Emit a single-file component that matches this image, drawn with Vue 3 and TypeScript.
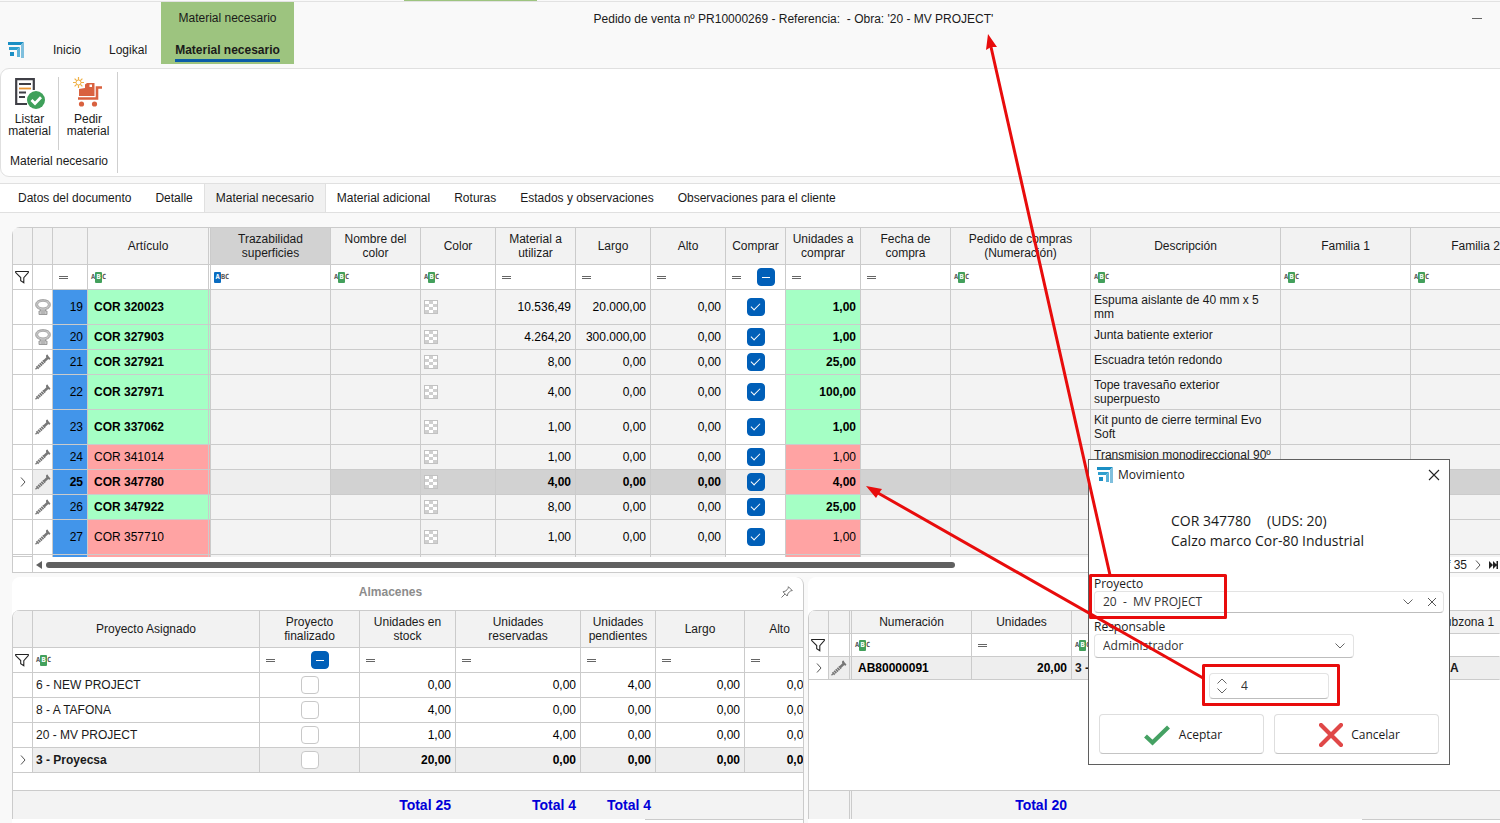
<script setup lang="ts">
import { ref } from 'vue'

type FilterKind = 'none' | 'funnel' | 'eq' | 'abc' | 'abc-start' | 'eq-check'

interface Column {
  label: string
  width?: number
  filter: FilterKind
  cls?: string
}

interface MaterialRow {
  n: number
  icon: 'seal' | 'screw'
  code: string
  tone: 'ok' | 'ko'
  used: string
  length: string
  buy: boolean
  units: string
  desc: string
  tall: boolean
  current?: boolean
}

const menu = ['Inicio', 'Logikal']

const docTabs = [
  'Datos del documento',
  'Detalle',
  'Material necesario',
  'Material adicional',
  'Roturas',
  'Estados y observaciones',
  'Observaciones para el cliente',
]
const activeTab = ref('Material necesario')

const columns: Column[] = [
  { label: '', width: 20, filter: 'funnel' },
  { label: '', width: 20, filter: 'none' },
  { label: '', width: 35, filter: 'eq' },
  { label: 'Artículo', width: 123, filter: 'abc', cls: 'fixed-edge' },
  { label: 'Trazabilidad\nsuperficies', width: 120, filter: 'abc-start', cls: 'focused' },
  { label: 'Nombre del\ncolor', width: 90, filter: 'abc' },
  { label: 'Color', width: 75, filter: 'abc' },
  { label: 'Material a\nutilizar', width: 80, filter: 'eq' },
  { label: 'Largo', width: 75, filter: 'eq' },
  { label: 'Alto', width: 75, filter: 'eq' },
  { label: 'Comprar', width: 60, filter: 'eq-check' },
  { label: 'Unidades a\ncomprar', width: 75, filter: 'eq' },
  { label: 'Fecha de\ncompra', width: 90, filter: 'eq' },
  { label: 'Pedido de compras\n(Numeración)', width: 140, filter: 'abc' },
  { label: 'Descripción', width: 190, filter: 'abc' },
  { label: 'Familia 1', width: 130, filter: 'abc' },
  { label: 'Familia 2', filter: 'abc' },
]

const rows = ref<MaterialRow[]>([
  { n: 19, icon: 'seal', code: 'COR 320023', tone: 'ok', used: '10.536,49', length: '20.000,00', buy: true, units: '1,00', desc: 'Espuma aislante de 40 mm x 5 mm', tall: true },
  { n: 20, icon: 'seal', code: 'COR 327903', tone: 'ok', used: '4.264,20', length: '300.000,00', buy: true, units: '1,00', desc: 'Junta batiente exterior', tall: false },
  { n: 21, icon: 'screw', code: 'COR 327921', tone: 'ok', used: '8,00', length: '0,00', buy: true, units: '25,00', desc: 'Escuadra tetón redondo', tall: false },
  { n: 22, icon: 'screw', code: 'COR 327971', tone: 'ok', used: '4,00', length: '0,00', buy: true, units: '100,00', desc: 'Tope travesaño exterior superpuesto', tall: true },
  { n: 23, icon: 'screw', code: 'COR 337062', tone: 'ok', used: '1,00', length: '0,00', buy: true, units: '1,00', desc: 'Kit punto de cierre terminal Evo Soft', tall: true },
  { n: 24, icon: 'screw', code: 'COR 341014', tone: 'ko', used: '1,00', length: '0,00', buy: true, units: '1,00', desc: 'Transmision monodireccional 90º', tall: false },
  { n: 25, icon: 'screw', code: 'COR 347780', tone: 'ko', used: '4,00', length: '0,00', buy: true, units: '4,00', desc: '', tall: false, current: true },
  { n: 26, icon: 'screw', code: 'COR 347922', tone: 'ok', used: '8,00', length: '0,00', buy: true, units: '25,00', desc: '', tall: false },
  { n: 27, icon: 'screw', code: 'COR 357710', tone: 'ko', used: '1,00', length: '0,00', buy: true, units: '1,00', desc: '', tall: true },
])

const stockColumns: Column[] = [
  { label: '', width: 20, filter: 'funnel' },
  { label: 'Proyecto Asignado', width: 227, filter: 'abc' },
  { label: 'Proyecto\nfinalizado', width: 100, filter: 'eq-check' },
  { label: 'Unidades en\nstock', width: 96, filter: 'eq' },
  { label: 'Unidades\nreservadas', width: 125, filter: 'eq' },
  { label: 'Unidades\npendientes', width: 75, filter: 'eq' },
  { label: 'Largo', width: 89, filter: 'eq' },
  { label: 'Alto', filter: 'eq' },
]

const stock = ref([
  { project: '6 - NEW PROJECT', done: false, values: ['0,00', '0,00', '4,00', '0,00', '0,00'], current: false },
  { project: '8 - A TAFONA', done: false, values: ['4,00', '0,00', '0,00', '0,00', '0,00'], current: false },
  { project: '20 - MV PROJECT', done: false, values: ['1,00', '4,00', '0,00', '0,00', '0,00'], current: false },
  { project: '3 - Proyecsa', done: false, values: ['20,00', '0,00', '0,00', '0,00', '0,00'], current: true },
])

const orderColumns: Column[] = [
  { label: '', width: 20, filter: 'funnel' },
  { label: '', width: 23, filter: 'none', cls: 'fixed-edge' },
  { label: 'Numeración', width: 120, filter: 'abc' },
  { label: 'Unidades', width: 100, filter: 'eq' },
  { label: '', width: 360, filter: 'abc' },
  { label: 'Subzona 1', filter: 'none' },
]

const units = ref(4)
const project = ref('20')
const owner = ref('Administrador')
</script>

<template>
  <div class="app">
    <svg class="defs" width="0" height="0" aria-hidden="true">
      <symbol id="logo" viewBox="0 0 16 16">
        <path d="M0 0H16L13 3H0Z" fill="#1b8fc4" />
        <path d="M16 0V16H13V3Z" fill="#7fbfdd" />
        <path d="M1 5H12L9 8H1Z" fill="#2f9fce" />
        <path d="M12 5V15H9V8Z" fill="#5cb2d8" />
        <path d="M2 10H6V14H2Z" fill="#1b8fc4" />
      </symbol>
      <symbol id="funnel" viewBox="0 0 14 14">
        <path d="M.7 1.5H13.3V2.6L8.800 7.600V12.800L5.700 10.600V7.600L.7 2.600Z" fill="none" stroke="#222" stroke-width="1.100" />
      </symbol>
      <symbol id="seal" viewBox="0 0 16 16">
        <path d="M5.500 10.500C2.500 9.800.7 8.200.7 5.700.7 2.500 3.500.7 8 .7S15.300 2.500 15.300 5.700C15.300 8.200 13.500 9.800 10.500 10.500V12H12V15.500H4V12H5.500Z" fill="#c8c8c8" stroke="#929292" stroke-width=".9" />
        <ellipse cx="8" cy="5.600" rx="5.300" ry="3.300" fill="#fff" stroke="#929292" stroke-width=".7" />
        <path d="M7 10.500V15M9 10.500V15" stroke="#9a9a9a" stroke-width=".8" />
      </symbol>
      <symbol id="screw" viewBox="0 0 16 16">
        <path d="M.5 15.200L2 13.800" stroke="#777" stroke-width="1.200" />
        <path d="M2 14L9.500 7" stroke="#777" stroke-width="3.200" stroke-dasharray="1.700 .5" />
        <path d="M9 7.400L13.300 3.300" stroke="#777" stroke-width="2.600" />
        <path d="M11.200 1L12.600.6 13.300 2.100 15.400 4.400 14.800 5.700 13.400 5.300 11 2.700Z" fill="#777" />
      </symbol>
      <symbol id="right" viewBox="0 0 8 10">
        <path d="M2 .5L6 5 2 9.500" fill="none" stroke="#555" stroke-width="1" />
      </symbol>
      <symbol id="down" viewBox="0 0 12 8">
        <path d="M1.500 1.500L6 6 10.500 1.500" fill="none" stroke="#666" stroke-width="1" />
      </symbol>
      <symbol id="swatch" viewBox="0 0 14 14">
        <rect x=".5" y=".5" width="13" height="13" fill="#fff" stroke="#c2c2c2" />
        <path d="M5 1H9V4H5ZM1 4H5V7H1ZM9 4H13V7H9ZM5 7H9V10H5ZM1 10H5V13H1ZM9 10H13V13H9Z" fill="#cfcfcf" />
      </symbol>
    </svg>

    <header class="top">
      <nav class="menu">
        <svg class="logo"><use href="#logo" /></svg>
        <button v-for="m in menu" :key="m" class="menu-item">{{ m }}</button>
      </nav>
      <div class="context">
        <span class="context-group">Material necesario</span>
        <button class="context-tab">Material necesario</button>
      </div>
      <h1 class="title">Pedido de venta nº PR10000269 - Referencia:&nbsp; - Obra: '20 - MV PROJECT'</h1>
      <div class="window-tools"><button class="minimize" aria-label="Minimizar"></button></div>
      <span class="top-mark"></span>
    </header>

    <section class="ribbon">
      <div class="group">
        <div class="tools">
          <button class="tool">
            <svg viewBox="0 0 32 32">
              <path d="M13 27H2.200V2.200H19.800V13" fill="none" stroke="#3f3f46" stroke-width="2.200" />
              <path d="M5 7H17M5 15.500H12M5 20H11" stroke="#3f3f46" stroke-width="1.800" />
              <path d="M5 11.500H17" stroke="#e89434" stroke-width="1.800" />
              <circle cx="22" cy="23" r="9" fill="#3fa05a" />
              <path d="M17.500 23L21 26.500 27 20.300" fill="none" stroke="#fff" stroke-width="2.800" />
            </svg>
            <span>Listar<br />material</span>
          </button>
          <button class="tool">
            <svg viewBox="0 0 32 32">
              <path d="M6.500 0V11M1 5.500H12M2.600 1.600L10.400 9.400M10.400 1.600L2.600 9.400" stroke="#efb148" stroke-width="1.200" />
              <circle cx="6.500" cy="5.500" r="2.500" fill="#fff" stroke="#efb148" stroke-width="1" />
              <path d="M7 12L13 11V7.500L15 6H22.500V19H7Z" fill="#d9613f" />
              <path d="M17.500 7.500V10H20V7.500Z" fill="#fff" />
              <path d="M6 21.500H25V10.500H30" fill="none" stroke="#d9613f" stroke-width="2.600" />
              <circle cx="9.500" cy="27" r="2.600" fill="#d9613f" />
              <circle cx="22.500" cy="27" r="2.600" fill="#d9613f" />
            </svg>
            <span>Pedir<br />material</span>
          </button>
        </div>
        <div class="group-name">Material necesario</div>
      </div>
    </section>

    <nav class="tabs">
      <button v-for="t in docTabs" :key="t" class="tab" :class="{ active: t === activeTab }" @click="activeTab = t">{{ t }}</button>
    </nav>

    <section class="grid-box">
      <table class="grid main-grid">
        <colgroup>
          <col v-for="(c, i) in columns" :key="i" :style="c.width ? { width: c.width + 'px' } : undefined" />
        </colgroup>
        <thead>
          <tr class="head">
            <th v-for="(c, i) in columns" :key="i" :class="c.cls">{{ c.label }}</th>
          </tr>
          <tr class="filters">
            <td v-for="(c, i) in columns" :key="i" :class="c.cls">
              <div class="filter">
                <svg v-if="c.filter === 'funnel'" class="funnel"><use href="#funnel" /></svg>
                <button v-else-if="c.filter.startsWith('eq')" class="eq" aria-label="Igual a"></button>
                <button v-else-if="c.filter.startsWith('abc')" class="abc" :class="{ start: c.filter === 'abc-start' }"><span>A</span><span>B</span><span>C</span></button>
                <label v-if="c.filter === 'eq-check'" class="mid"><input type="checkbox" class="box mixed" aria-label="Filtrar Comprar" /></label>
              </div>
            </td>
          </tr>
        </thead>
        <tbody>
          <tr v-for="r in rows" :key="r.n" :class="{ tall: r.tall, current: r.current }">
            <td class="white mark"><svg v-if="r.current" class="arrow"><use href="#right" /></svg></td>
            <td class="white ico"><svg class="kind"><use :href="'#' + r.icon" /></svg></td>
            <td class="num index">{{ r.n }}</td>
            <td class="code fixed-edge" :class="r.tone">{{ r.code }}</td>
            <td class="trace"></td>
            <td class="dark"></td>
            <td class="dark sw"><svg class="swatch"><use href="#swatch" /></svg></td>
            <td class="num dark">{{ r.used }}</td>
            <td class="num dark">{{ r.length }}</td>
            <td class="num dark">0,00</td>
            <td class="white check"><input v-model="r.buy" type="checkbox" class="box" :aria-label="'Comprar ' + r.code" /></td>
            <td class="num" :class="r.tone">{{ r.units }}</td>
            <td class="dark"></td>
            <td class="dark"></td>
            <td class="dark desc">{{ r.desc }}</td>
            <td class="dark"></td>
            <td class="dark"></td>
          </tr>
          <tr class="partial">
            <td class="white"></td>
            <td class="white"></td>
            <td class="index"></td>
            <td class="ko fixed-edge"></td>
            <td v-for="i in 13" :key="i" :class="{ white: i === 7, ko: i === 8 }"></td>
          </tr>
        </tbody>
      </table>
      <div class="scroll">
        <span class="corner"></span>
        <svg class="back" viewBox="0 0 6 8"><path d="M6 0V8L0 4Z" fill="#606060" /></svg>
        <div class="track"><span class="thumb"></span></div>
        <div class="pager">
          <span>25 of 35</span>
          <button aria-label="Siguiente"><svg class="arrow"><use href="#right" /></svg></button>
          <button aria-label="Último"><svg class="last" viewBox="0 0 9 8"><path d="M0 0L4 4 0 8ZM4 0L8 4 4 8ZM7.500 0H9V8H7.500Z" fill="#222" /></svg></button>
        </div>
      </div>
    </section>

    <div class="panes">
      <section class="pane left-pane">
        <header class="pane-title">
          <h2>Almacenes</h2>
          <button class="pin" aria-label="Fijar panel">
            <svg viewBox="0 0 12 12"><path d="M.5 11.500L4 8M2 5.800L6.200 10 7 7.200 9.800 4.800 11.300 4.600 7.400.7 7.200 2.200 4.800 5Z" fill="none" stroke="#666" stroke-width=".9" /></svg>
          </button>
        </header>
        <div class="pane-body">
          <table class="grid stock-grid">
            <colgroup>
              <col v-for="(c, i) in stockColumns" :key="i" :style="c.width ? { width: c.width + 'px' } : undefined" />
            </colgroup>
            <thead>
              <tr class="head">
                <th v-for="(c, i) in stockColumns" :key="i">{{ c.label }}</th>
              </tr>
              <tr class="filters">
                <td v-for="(c, i) in stockColumns" :key="i">
                  <div class="filter">
                    <svg v-if="c.filter === 'funnel'" class="funnel"><use href="#funnel" /></svg>
                    <button v-else-if="c.filter.startsWith('eq')" class="eq" aria-label="Igual a"></button>
                    <button v-else class="abc"><span>A</span><span>B</span><span>C</span></button>
                    <label v-if="c.filter === 'eq-check'" class="mid"><input type="checkbox" class="box mixed" aria-label="Filtrar finalizado" /></label>
                  </div>
                </td>
              </tr>
            </thead>
            <tbody>
              <tr v-for="s in stock" :key="s.project" :class="{ current: s.current }">
                <td class="mark white"><svg v-if="s.current" class="arrow"><use href="#right" /></svg></td>
                <td class="text">{{ s.project }}</td>
                <td class="check"><input v-model="s.done" type="checkbox" class="box" :aria-label="'Finalizado ' + s.project" /></td>
                <td v-for="(v, i) in s.values" :key="i" class="num">{{ v }}</td>
              </tr>
            </tbody>
          </table>
        </div>
        <div class="totals stock-totals">
          <span class="total">Total 25</span>
          <span class="total">Total 4</span>
          <span class="total">Total 4</span>
        </div>
        <div class="tail"></div>
      </section>

      <section class="pane right-pane">
        <header class="pane-title"></header>
        <div class="pane-body">
          <table class="grid order-grid">
            <colgroup>
              <col v-for="(c, i) in orderColumns" :key="i" :style="c.width ? { width: c.width + 'px' } : undefined" />
            </colgroup>
            <thead>
              <tr class="head">
                <th v-for="(c, i) in orderColumns" :key="i" :class="c.cls">{{ c.label }}</th>
              </tr>
              <tr class="filters">
                <td v-for="(c, i) in orderColumns" :key="i" :class="c.cls">
                  <div class="filter">
                    <svg v-if="c.filter === 'funnel'" class="funnel"><use href="#funnel" /></svg>
                    <button v-else-if="c.filter === 'eq'" class="eq" aria-label="Igual a"></button>
                    <button v-else-if="c.filter === 'abc'" class="abc"><span>A</span><span>B</span><span>C</span></button>
                  </div>
                </td>
              </tr>
            </thead>
            <tbody>
              <tr class="current">
                <td class="mark white"><svg class="arrow"><use href="#right" /></svg></td>
                <td class="ico fixed-edge"><svg class="kind"><use href="#screw" /></svg></td>
                <td class="code">AB80000091</td>
                <td class="num">20,00</td>
                <td class="text">3 - Proyecsa</td>
                <td class="zone">A</td>
              </tr>
            </tbody>
          </table>
        </div>
        <div class="totals order-totals">
          <span class="stub"></span>
          <span class="total">Total 20</span>
        </div>
        <div class="tail"></div>
      </section>
    </div>

    <div class="dialog" role="dialog" aria-labelledby="dlg-title">
      <header class="dlg-head">
        <svg class="logo"><use href="#logo" /></svg>
        <h2 id="dlg-title">Movimiento</h2>
        <button class="dlg-close" aria-label="Cerrar"><svg viewBox="0 0 12 12"><path d="M1 1L11 11M11 1L1 11" stroke="#222" stroke-width="1.100" /></svg></button>
      </header>
      <div class="dlg-text">
        <div class="dlg-line"><span>COR 347780</span><span>(UDS: 20)</span></div>
        <div>Calzo marco Cor-80 Industrial</div>
      </div>
      <label class="dlg-label" for="f-project">Proyecto</label>
      <div class="field project">
        <select id="f-project" v-model="project">
          <option value="20">20&nbsp; -&nbsp; MV PROJECT</option>
        </select>
        <svg class="down"><use href="#down" /></svg>
        <button class="clear" aria-label="Borrar"><svg viewBox="0 0 10 10"><path d="M1 1L9 9M9 1L1 9" stroke="#555" stroke-width="1" /></svg></button>
      </div>
      <label class="dlg-label second" for="f-owner">Responsable</label>
      <div class="field owner">
        <select id="f-owner" v-model="owner">
          <option>Administrador</option>
        </select>
        <svg class="down"><use href="#down" /></svg>
      </div>
      <div class="field spin">
        <div class="steps">
          <button aria-label="Más" @click="units++"><svg class="down up"><use href="#down" /></svg></button>
          <button aria-label="Menos" @click="units--"><svg class="down"><use href="#down" /></svg></button>
        </div>
        <input v-model="units" type="number" aria-label="Unidades" />
      </div>
      <div class="dlg-actions">
        <button class="action">
          <svg viewBox="0 0 28 24"><path d="M2.500 13L9.500 19.500 25.500 4" fill="none" stroke="#45a163" stroke-width="4.200" /></svg>
          <span>Aceptar</span>
        </button>
        <button class="action cancel">
          <svg viewBox="0 0 24 24"><path d="M2 2L22 22M22 2L2 22" fill="none" stroke="#e04848" stroke-width="4.200" stroke-linecap="round" /></svg>
          <span>Cancelar</span>
        </button>
      </div>
    </div>

    <svg class="notes" width="1500" height="823" viewBox="0 0 1500 823" aria-hidden="true">
      <g fill="none" stroke="#e80c0c" stroke-width="3" stroke-linejoin="round">
        <rect x="1090.500" y="575.500" width="135" height="42" />
        <rect x="1203.500" y="665.500" width="135" height="39" />
        <path d="M1110 575L991 47M1203 678L878 493" />
      </g>
      <path d="M988 34L997 47 991 47 986 50ZM866 486L882 489 879 493 876 498Z" fill="#e80c0c" />
    </svg>
  </div>
</template>

<style>
body {
  margin: 0;
  overflow: hidden;
}
</style>

<style scoped>
.app {
  --line: #cbcbcb;
  --soft: #f3f3f3;
  position: relative;
  display: flex;
  flex-direction: column;
  min-height: 100vh;
  overflow: hidden;
  box-sizing: border-box;
  background: #f9f9f9;
  color: #1a1a1a;
  font: 12px/14px "Liberation Sans", Arial, sans-serif;
}
.defs {
  position: absolute;
}
button {
  padding: 0;
  border: 0;
  background: none;
  color: inherit;
  font: inherit;
}
h1,
h2 {
  margin: 0;
  font: inherit;
}
svg {
  display: block;
}

/* title bar */
.top {
  position: relative;
  display: grid;
  grid-template-columns: 161px 133px 1fr 207px;
  height: 66px;
  border-top: 1px solid #e2e2e2;
  margin-top: 1px;
}
.top-mark {
  position: absolute;
  top: -2px;
  left: 404px;
  width: 133px;
  height: 1px;
  background: #9dc47f;
}
.menu {
  display: flex;
  align-items: center;
  padding: 30px 0 0 8px;
  gap: 28px;
}
.menu .logo {
  margin-right: 1px;
}
.logo {
  width: 16px;
  height: 16px;
}
.context {
  display: flex;
  flex-direction: column;
  align-items: center;
  justify-content: space-between;
  height: 62px;
  background: #9dc47f;
  box-sizing: border-box;
  padding: 9px 0 2px;
}
.context-tab {
  font-weight: bold;
  padding-bottom: 2px;
  border-bottom: 3px solid #0a5ca8;
}
.title {
  padding-top: 10px;
  text-align: center;
  white-space: nowrap;
}
.window-tools {
  display: flex;
  justify-content: flex-end;
  align-items: flex-start;
  padding: 16px 18px 0 0;
}
.minimize {
  width: 10px;
  height: 1px;
  background: #666;
}

/* ribbon */
.ribbon {
  display: flex;
  margin-right: -10px;
  border: 1px solid #e0e0e0;
  border-radius: 9px;
  background: #fff;
  padding: 3px 0;
}
.group {
  display: flex;
  flex-direction: column;
  align-items: center;
  width: 116px;
  border-right: 1px solid #cfcfcf;
  height: 101px;
}
.tools {
  display: flex;
  flex: 1;
  align-self: stretch;
  padding: 5px 0 0;
}
.tool {
  display: flex;
  flex-direction: column;
  align-items: center;
  width: 58px;
  height: 73px;
  line-height: 12px;
}
.tool + .tool {
  width: 60px;
  border-left: 1px solid #cfcfcf;
}
.tool svg {
  width: 32px;
  height: 32px;
  margin-bottom: 4px;
}
.group-name {
  padding-bottom: 5px;
}

/* document tabs */
.tabs {
  display: flex;
  margin: 6px -10px 14px 0;
  padding-left: 6px;
  border: 1px solid #e0e0e0;
  border-left: 0;
  background: #fff;
}
.tab {
  height: 28px;
  padding: 0 12px;
}
.tab.active {
  background: #f1f1f1;
  box-shadow: 0 0 0 1px #e0e0e0;
  padding: 0 11px;
}

/* grids */
.grid-box {
  margin-left: 12px;
  overflow: hidden;
  border-top-left-radius: 8px;
  background: #fff;
}
.grid {
  width: 100%;
  table-layout: fixed;
  border-collapse: separate;
  border-spacing: 0;
  border-left: 1px solid var(--line);
  border-top: 1px solid var(--line);
}
.main-grid {
  min-width: 1529px;
}
.stock-grid {
  min-width: 802px;
}
.grid th,
.grid td {
  box-sizing: border-box;
  padding: 0;
  border-right: 1px solid var(--line);
  border-bottom: 1px solid var(--line);
  font-weight: normal;
  height: 25px;
  background: var(--soft);
}
.grid .fixed-edge {
  border-right: 3px double var(--line);
}
.grid th {
  height: 37px;
  background: #f2f2f2;
  white-space: pre;
}
.grid th.focused {
  background: #d2d2d2;
}
.grid .filters td,
.grid td.white,
.stock-grid td {
  background: #fff;
}
.order-grid tr th,
.order-grid tr td {
  height: 23px;
}
.grid .tall td {
  height: 35px;
}
.grid .partial td {
  height: 2px;
  border-bottom: 0;
  line-height: 0;
}
.grid .partial td:first-child {
  border-bottom: 1px solid var(--line);
}
.filter {
  display: flex;
  align-items: center;
}
.funnel {
  width: 14px;
  height: 14px;
  margin-left: 2px;
}
.eq {
  width: 9px;
  height: 3px;
  margin: 0 6px;
  box-sizing: border-box;
  border: solid #666;
  border-width: 1px 0;
}
.mid {
  flex: 1;
  display: flex;
  justify-content: center;
}
.abc {
  display: flex;
  align-items: center;
  margin-left: 3px;
  color: #555;
  font: bold 7px/11px "DejaVu Sans Mono", monospace;
}
.abc span {
  width: 4px;
}
.abc span:nth-child(2),
.abc.start span:first-child {
  width: 7px;
  border-radius: 1px;
  background: #43a05c;
  color: #fff;
  text-align: center;
}
.abc.start span:first-child {
  background: #0a6cc0;
}
.abc.start span:nth-child(2) {
  width: 4px;
  background: none;
  color: inherit;
}
.grid .num {
  text-align: right;
  padding-right: 4px;
  color: #000;
}
.grid td.index {
  background: #4295ea;
}
.grid .code {
  padding-left: 6px;
  color: #000;
}
.grid .text {
  padding-left: 3px;
}
.grid td.ok {
  background: #a5ffc5;
  font-weight: bold;
}
.grid td.ko {
  background: #ffa3a3;
}
.grid .current td {
  font-weight: bold;
  background: #eeeeee;
}
.grid .current td.index {
  background: #4295ea;
}
.grid .current td.ko {
  background: #ffa3a3;
}
.grid .current td.dark {
  background: #d2d2d2;
}
.grid .current td.mark {
  background: #fff;
}
.mark .arrow {
  margin-left: 6px;
}
.arrow {
  width: 8px;
  height: 10px;
}
.kind {
  width: 16px;
  height: 16px;
  margin-left: 2px;
}
.swatch {
  width: 14px;
  height: 14px;
  margin-left: 3px;
}
.grid .desc {
  vertical-align: top;
  padding: 3px 3px 0 3px;
}
.check {
  text-align: center;
}
.box {
  appearance: none;
  display: block;
  width: 18px;
  height: 18px;
  margin: 0 auto;
  box-sizing: border-box;
  border: 1px solid #c8c8c8;
  border-radius: 4px;
  background: #fff;
}
.box:checked,
.box.mixed {
  border-color: #005fb8;
  background: #005fb8;
}
.box.mixed {
  margin: 0;
}
.box:checked::after {
  content: "";
  display: block;
  width: 8px;
  height: 4px;
  margin: 4px 0 0 3px;
  border: solid #fff;
  border-width: 0 0 1px 1px;
  transform: rotate(-45deg);
}
.box.mixed::after {
  content: "";
  display: block;
  width: 8px;
  height: 1px;
  margin: 8px 0 0 4px;
  background: #fff;
}
.scroll {
  display: flex;
  align-items: center;
  height: 15px;
  border-bottom: 1px solid var(--line);
  border-left: 1px solid var(--line);
}
.corner {
  align-self: stretch;
  width: 19px;
  border-right: 1px solid var(--line);
}
.back {
  width: 6px;
  height: 8px;
  margin: 0 4px 0 3px;
}
.track {
  flex: 1;
}
.thumb {
  display: block;
  width: 66%;
  height: 6px;
  border-radius: 3px;
  background: #606060;
}
.pager {
  display: flex;
  align-items: center;
  gap: 7px;
  padding-right: 2px;
}
.last {
  width: 9px;
  height: 8px;
}

/* lower panes */
.panes {
  flex: 1;
  display: grid;
  grid-template-columns: minmax(0, 792fr) minmax(0, 692fr);
  gap: 4px;
  margin: 4px 0 0 12px;
}
.pane {
  display: flex;
  flex-direction: column;
  overflow: hidden;
  border-radius: 8px 8px 0 0;
  background: #fff;
}
.left-pane {
  border-right: 1px solid var(--line);
}
.right-pane {
  border-top-right-radius: 0;
}
.pane-title {
  display: flex;
  align-items: center;
  height: 33px;
  box-sizing: border-box;
  padding: 0 10px 4px 0;
}
.pane-title h2 {
  flex: 1;
  padding-right: 12px;
  text-align: center;
  color: #8c8c8c;
  font-weight: bold;
}
.pin svg {
  width: 12px;
  height: 12px;
}
.pane-body {
  flex: 1;
  overflow: hidden;
  border-left: 1px solid var(--line);
  border-radius: 8px 0 0 0;
}
.pane-body .grid {
  border-left: 0;
}
.grid .zone {
  padding-left: 18px;
}
.grid th:last-child,
.order-grid td:last-child {
  border-right-color: transparent;
}
.totals {
  display: grid;
  height: 28px;
  border: solid var(--line);
  border-width: 1px 0 0 1px;
  background: #f3f3f3;
  color: #0000d8;
  font: bold 14px/28px "Liberation Sans", Arial, sans-serif;
  text-align: right;
}
.stock-totals {
  grid-template-columns: 443px 125px 75px;
}
.order-totals {
  grid-template-columns: 43px 220px;
}
.total {
  padding-right: 5px;
}
.stub {
  border-right: 3px double var(--line);
}
.tail {
  display: flex;
  justify-content: flex-end;
  height: 4px;
}
.tail::after {
  content: "";
  width: 20%;
  border-top: 1px solid var(--line);
}

/* dialog */
.dialog {
  position: absolute;
  left: 1088px;
  top: 459px;
  width: 362px;
  box-sizing: border-box;
  border: 1px solid #5f5f5f;
  background: #fff;
  padding: 0 5px 10px;
  font: 12px/16px "Open Sans", "Noto Sans", sans-serif;
}
.dlg-head {
  display: flex;
  align-items: center;
  height: 30px;
  padding-left: 3px;
}
.dlg-head h2 {
  flex: 1;
  padding-left: 5px;
}
.dlg-close {
  margin-right: 4px;
}
.dlg-close svg {
  width: 12px;
  height: 12px;
}
.dlg-text {
  padding: 21px 0 24px 77px;
  font-size: 14px;
  line-height: 20px;
}
.dlg-line {
  display: flex;
  gap: 16px;
}
.dlg-label {
  display: block;
  height: 16px;
  line-height: 18px;
}
.dlg-label.second {
  padding-top: 5px;
}
.field {
  display: flex;
  align-items: center;
  box-sizing: border-box;
  height: 22px;
  border: 1px solid #e3e3e3;
  border-bottom-color: #bdbdbd;
  border-radius: 4px;
  background: #fff;
}
.field select,
.field input {
  flex: 1;
  min-width: 0;
  padding: 0 8px;
  border: 0;
  background: none;
  appearance: none;
  color: #333;
  font: inherit;
  outline: none;
}
.field input {
  appearance: textfield;
}
.field input::-webkit-inner-spin-button {
  appearance: none;
}
.down {
  width: 12px;
  height: 8px;
}
.down.up {
  transform: rotate(180deg);
}
.project .clear {
  margin: 0 6px 0 13px;
}
.clear svg {
  width: 10px;
  height: 10px;
}
.owner {
  width: 260px;
  height: 24px;
  padding-right: 7px;
}
.spin {
  width: 120px;
  height: 26px;
  margin: 15px 0 0 115px;
}
.steps {
  display: grid;
  gap: 2px;
  padding-left: 6px;
}
.spin input {
  padding-left: 13px;
}
.dlg-actions {
  display: grid;
  grid-template-columns: 1fr 1fr;
  gap: 10px;
  margin: 15px 5px 0;
}
.action {
  display: flex;
  align-items: center;
  justify-content: center;
  gap: 8px;
  height: 40px;
  padding: 2px 0 0 2px;
  border: 1px solid #dedede;
  border-bottom-color: #c4c4c4;
  border-radius: 4px;
  box-sizing: border-box;
}
.action svg {
  width: 28px;
  height: 24px;
}
.action.cancel {
  padding-left: 6px;
}
.action.cancel svg {
  width: 24px;
}

.notes {
  position: absolute;
  left: 0;
  top: 0;
  pointer-events: none;
}
</style>
